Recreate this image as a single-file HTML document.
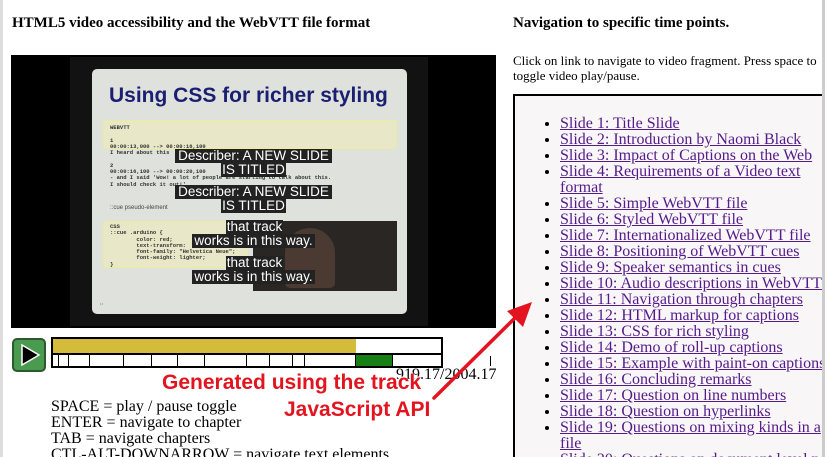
<!DOCTYPE html>
<html style="height:457px;overflow:hidden"><head><meta charset="utf-8"><style>
*{margin:0;padding:0;box-sizing:border-box}
html,body{width:825px;height:457px;overflow:hidden}
body{background:#fff;font-family:"Liberation Serif",serif;position:relative;color:#000}
.a{position:absolute}
h1{position:absolute;font-size:15px;font-weight:bold}
.mono{font-family:"Liberation Mono",monospace;font-size:5.5px;font-weight:bold;color:#333;line-height:6.3px;white-space:pre}
.cap{position:absolute;background:#222;color:#fff;font-family:"Liberation Sans",sans-serif;font-size:13.5px;line-height:14px;text-align:center}
ul{list-style:disc;padding-left:45px;padding-top:20px}
li{font-size:16px;line-height:16px}
li a{color:#551a8b;text-decoration:underline}
.rt{position:absolute;font-family:"Liberation Sans",sans-serif;font-weight:bold;font-size:21px;color:#e3141f;text-shadow:0 0 2px #fff,1px 1px 1px #fff,-1px -1px 1px #fff;white-space:nowrap}
</style></head><body>
<div class="a" style="left:0;top:0;width:3px;height:457px;background:#ddd"></div>
<h1 style="left:12px;top:15px">HTML5 video accessibility and the WebVTT file format</h1>
<h1 style="left:513px;top:15px">Navigation to specific time points.</h1>
<div class="a" style="left:513px;top:53px;width:312px;font-size:13px;line-height:15px">Click on link to navigate to video fragment. Press space to toggle video play/pause.</div>

<div class="a" style="left:11px;top:55px;width:485px;height:273px;background:#000"></div>
<div class="a" style="left:70px;top:57px;width:358px;height:269px;background:#121212"></div>
<div class="a" style="left:92px;top:69px;width:315px;height:245px;background:#dfe2dc;border-radius:5px"></div>
<div class="a" style="left:109px;top:84px;font-family:'Liberation Sans',sans-serif;font-weight:900;font-size:21px;color:#1a1f72;white-space:nowrap">Using CSS for richer styling</div>
<div class="a" style="left:103px;top:120px;width:294px;height:29px;background:#e8e8c8;border:1px solid #ecec9a;border-radius:3px"></div>
<div class="a mono" style="left:110px;top:125px">WEBVTT

1
00:00:13,000 --> 00:00:16,100
I heard about this                              online -

2
00:00:16,100 --> 00:00:20,100
- and I said 'Wow! a lot of people are starting to talk about this.
I should check it out!'</div>
<div class="a" style="left:110px;top:205px;font-family:'Liberation Sans',sans-serif;font-size:6px;color:#444">::cue pseudo-element</div>
<div class="a" style="left:103px;top:221px;width:145px;height:47px;background:#e8e8c8;border:1px solid #ecec9a;border-radius:3px"></div>
<div class="a mono" style="left:110px;top:224px">CSS
::cue .arduino {
        color: red;
        text-transform:
        font-family: "Helvetica Neue";
        font-weight: lighter;
}</div>
<div class="a" style="left:253px;top:221px;width:144px;height:70px;background:#2a2624"></div>
<div class="a" style="left:285px;top:228px;width:50px;height:60px;background:#4a3a32;border-radius:25px 25px 5px 5px"></div>
<div class="a" style="left:100px;top:302px;font-size:3px;color:#666">13</div>
<div class="cap" style="left:175px;top:149px;width:157px">Describer: A NEW SLIDE</div>
<div class="cap" style="left:221px;top:163px;width:65px">IS TITLED</div>
<div class="cap" style="left:175px;top:185px;width:157px">Describer: A NEW SLIDE</div>
<div class="cap" style="left:221px;top:199px;width:65px">IS TITLED</div>
<div class="cap" style="left:226px;top:220px;width:57px">that track</div>
<div class="cap" style="left:192px;top:234px;width:123px">works is in this way.</div>
<div class="cap" style="left:226px;top:256px;width:57px">that track</div>
<div class="cap" style="left:192px;top:270px;width:123px">works is in this way.</div>

<div class="a" style="left:12px;top:338px;width:34px;height:34px;background:#4a9a50;border:2px solid #2a5a2e;border-radius:5px"></div>
<svg class="a" style="left:12px;top:338px" width="34" height="34"><polygon points="10,7 27,17 10,27" fill="#000" stroke="#fff" stroke-width="1.5"/></svg>
<div class="a" style="left:51px;top:337px;width:392px;height:31px;border:2px solid #000;background:#fff"></div>
<div class="a" style="left:53px;top:339px;width:303px;height:14px;background:#d4bb3c"></div>
<div class="a" style="left:51px;top:353px;width:392px;height:2px;background:#000"></div>
<div class="a" style="left:356px;top:355px;width:36px;height:11px;background:#167f16"></div>
<svg class="a" style="left:51px;top:355px" width="392" height="12"><g stroke="#000" stroke-width="1">
<line x1="7.5" y1="0" x2="7.5" y2="12"/><line x1="17.5" y1="0" x2="17.5" y2="12"/><line x1="38.5" y1="0" x2="38.5" y2="12"/><line x1="72.5" y1="0" x2="72.5" y2="12"/><line x1="100.5" y1="0" x2="100.5" y2="12"/><line x1="126.5" y1="0" x2="126.5" y2="12"/><line x1="153.5" y1="0" x2="153.5" y2="12"/><line x1="195.5" y1="0" x2="195.5" y2="12"/><line x1="218.5" y1="0" x2="218.5" y2="12"/><line x1="241.5" y1="0" x2="241.5" y2="12"/><line x1="253.5" y1="0" x2="253.5" y2="12"/><line x1="304.5" y1="0" x2="304.5" y2="12"/><line x1="341.5" y1="0" x2="341.5" y2="12"/></g></svg>
<div class="a" style="left:490px;top:356px;width:1px;height:10px;background:#000"></div>
<div class="a" style="left:396px;top:366px;font-size:16px">919.17/2004.17</div>
<div class="a" style="left:51px;top:399px;font-size:16px;line-height:16px;white-space:nowrap">SPACE = play / pause toggle<br>ENTER = navigate to chapter<br>TAB = navigate chapters<br>CTL-ALT-DOWNARROW = navigate text elements</div>

<div class="a" style="left:513px;top:94px;width:320px;height:363px;border-left:2px solid #000;border-top:2px solid #000;background:#f8f6f6;overflow:hidden">
<ul>
<li><a>Slide 1: Title Slide</a></li>
<li><a>Slide 2: Introduction by Naomi Black</a></li>
<li><a>Slide 3: Impact of Captions on the Web</a></li>
<li><a>Slide 4: Requirements of a Video text format</a></li>
<li><a>Slide 5: Simple WebVTT file</a></li>
<li><a>Slide 6: Styled WebVTT file</a></li>
<li><a>Slide 7: Internationalized WebVTT file</a></li>
<li><a>Slide 8: Positioning of WebVTT cues</a></li>
<li><a>Slide 9: Speaker semantics in cues</a></li>
<li style="white-space:nowrap"><a>Slide 10: Audio descriptions in WebVTT</a></li>
<li><a>Slide 11: Navigation through chapters</a></li>
<li><a>Slide 12: HTML markup for captions</a></li>
<li><a>Slide 13: CSS for rich styling</a></li>
<li><a>Slide 14: Demo of roll-up captions</a></li>
<li style="white-space:nowrap"><a>Slide 15: Example with paint-on captions</a></li>
<li><a>Slide 16: Concluding remarks</a></li>
<li><a>Slide 17: Question on line numbers</a></li>
<li><a>Slide 18: Question on hyperlinks</a></li>
<li><a>Slide 19: Questions on mixing kinds in a file</a></li>
<li style="white-space:nowrap"><a>Slide 20: Questions on document level notes</a></li>
</ul></div>
<div class="a" style="left:822px;top:0;width:3px;height:457px;background:#ccc"></div>

<div class="rt" style="left:162px;top:371px">Generated using the track</div>
<div class="rt" style="left:284px;top:398px">JavaScript API</div>
<svg class="a" style="left:0;top:0" width="825" height="457">
<line x1="434" y1="398" x2="520" y2="313" stroke="#e3141f" stroke-width="3.5" stroke-linecap="round"/>
<polygon points="507,311 532,302 523,327" fill="#e3141f"/>
</svg>
</body></html>
